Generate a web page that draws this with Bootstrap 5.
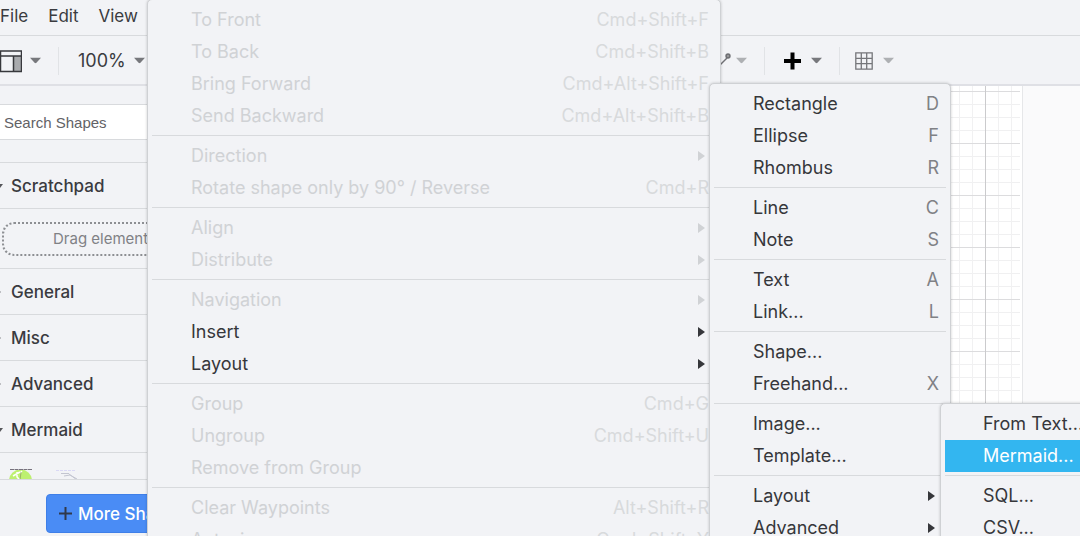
<!DOCTYPE html>
<html lang="en">
<head>
<meta charset="utf-8">
<meta name="viewport" content="width=device-width, initial-scale=1">
<title>Diagram editor</title>
<link href="https://cdn.jsdelivr.net/npm/bootstrap@5.3.0/dist/css/bootstrap.min.css" rel="stylesheet">
<style>
  :root { --chrome: #f2f3f6; --line: #d8dadd; --ink: #3a3b3f; --off: #d0d2d5; }
  body { font-family: Inter, "Liberation Sans", sans-serif; font-size: 17px; line-height: 24px; color: var(--ink); background: var(--chrome); }
  .menubar { height: 36px; gap: 20px; border-bottom: 1px solid var(--line); }
  .menubar a { color: var(--ink); }
  .toolbar { height: 50px; padding-top: 1px; border-bottom: 2px solid #dfe0e5; }
  .tools-right { margin-right: 186px; }
  .tool { border: 0; padding: 0; background: none; color: var(--ink); display: flex; align-items: center; gap: 8px; }
  .tool.wide { gap: 10px; }
  .zoom-level { font-size: 18px; }
  .rule { width: 1px; height: 28px; margin: 0 15px 0 17px; background: #e1e3e6; }
  .sidebar { width: 240px; background: var(--chrome); }
  .searchbox { height: 36px; padding: 0 4px; border: 1px solid var(--line); border-left: 0; border-radius: 0; font: 15px "Liberation Sans", sans-serif; color: #555; background: #fff; }
  .searchbox::placeholder { color: #626266; opacity: 1; }
  .find { padding: 18px 0 22px; border-bottom: 1px solid var(--line); }
  .section { height: 46px; gap: 8px; padding: 0; border: 0; border-bottom: 1px solid var(--line); background: none; color: var(--ink); font-size: 17px; font-weight: 500; }
  .scratch { height: 60px; padding: 13px 2px; border-bottom: 1px solid var(--line); }
  .dropzone { border: 2px dotted #8d8f93; border-radius: 12px; height: 34px; padding-left: 49px; font-size: 15px; color: #808185; }
  .thumbs { padding: 15px 0 0 9px; gap: 23px; }
  .foot { height: 57px; padding: 14px 0 0 46px; border-top: 1px solid var(--line); background: var(--chrome); }
  .more { height: 39px; padding: 0 12px; gap: 6px; border: 1px solid #3f7fe8; border-radius: 4px; background: #4a8cf5; color: #fff; font-size: 17px; font-weight: 500; }
  .canvas { background: #fafafb; }
  .paper { margin-right: 57px; border-right: 1px solid #e6e7e9; padding-right: 2px; background: #fff; }
  .grid {
    background-image:
      linear-gradient(to left, #cbcbcd 1px, transparent 1px),
      linear-gradient(#dcdcde 1px, transparent 1px),
      linear-gradient(to left, #f1f1f2 1px, transparent 1px),
      linear-gradient(#f0f0f1 1px, transparent 1px);
    background-size: 52px 52px, 52px 52px, 13px 13px, 13px 13px;
    background-position: right 34px top 5px, right 34px top 5px, right 8px top 5px, right 8px top 5px;
  }
  .popup { position: absolute; display: block; margin: 0; padding: 4px; border: 1px solid #cfd1d4; border-radius: 5px; background: var(--chrome); box-shadow: 0 0 3px rgba(0, 0, 0, .2); font-size: 18px; color: var(--ink); }
  .popup .dropdown-item { height: 32px; padding: 0 7px 0 39px; display: flex; align-items: center; justify-content: space-between; color: #36373b; }
  .popup .dropdown-item:disabled { color: var(--off); }
  .popup .dropdown-item.picked { background: #33b6f0; color: #fff; }
  .popup kbd { padding: 0; background: none; color: #808185; font: inherit; }
  .popup :disabled kbd { color: #d8dadc; }
  .popup .dropdown-divider { margin: 3px 0 4px; border-top: 1px solid var(--line); opacity: 1; }
  .menu-arrange { left: 147px; top: -1px; width: 574px; z-index: 10; }
  .menu-insert { left: 709px; top: 83px; width: 242px; z-index: 20; }
  .menu-advanced { left: 940px; top: 403px; width: 180px; z-index: 30; }
  .menu-advanced .dropdown-item { padding-left: 38px; }
</style>
<script src="https://cdn.jsdelivr.net/npm/bootstrap@5.3.0/dist/js/bootstrap.bundle.min.js"></script>
</head>
<body class="vh-100 overflow-hidden position-relative d-flex flex-column">
<svg class="d-none">
  <symbol id="down" viewBox="0 0 12 7"><path d="M0 0.5h12L7 6q-1 .8-2 0z" fill="currentColor"/></symbol>
  <symbol id="right" viewBox="0 0 7 10"><path d="M0 0l7 5-7 5z" fill="currentColor"/></symbol>
  <symbol id="open" viewBox="0 0 3 6"><path d="M0 1h3L0 5z" fill="#55565a"/></symbol>
  <symbol id="shut" viewBox="0 0 3 6"><path d="M0 2l1 1-1 1z" fill="#8a8b8f"/></symbol>
</svg>

<nav class="menubar d-flex align-items-center flex-shrink-0 pb-1">
  <a class="text-decoration-none" href="#">File</a>
  <a class="text-decoration-none" href="#">Edit</a>
  <a class="text-decoration-none" href="#">View</a>
</nav>

<div class="toolbar d-flex align-items-center flex-shrink-0 justify-content-between">
  <div class="d-flex align-items-center">
    <button class="tool" aria-label="View panels">
      <svg width="22" height="24" viewBox="0 0 22 24" fill="none"><path d="M13.500 7h7.500v15h-7.500z" fill="#a9abae"/><path d="M-1 2h22.500v20.500H-1M0 7h21M13.500 7v15M.5 2v20" stroke="#37383c" stroke-width="1.500"/></svg>
      <svg width="11" height="7" color="#77787c"><use href="#down"/></svg>
    </button>
    <span class="rule"></span>
    <button class="tool zoom-level ms-1">100%<svg width="11" height="7" color="#77787c"><use href="#down"/></svg></button>
  </div>
  <div class="tools-right d-flex align-items-center">
    <button class="tool gap-1" aria-label="Waypoints">
      <svg width="24" height="24" viewBox="0 0 24 24" fill="none" stroke="#707175"><path d="M8 20L19 9" stroke-width="1.500"/><circle cx="20" cy="7" r="1.800" fill="#aaa" stroke-width="1.800"/></svg>
      <svg width="11" height="7" color="#aeb0b3"><use href="#down"/></svg>
    </button>
    <span class="rule"></span>
    <button class="tool wide ms-1" aria-label="Insert">
      <svg width="17" height="18" viewBox="0 0 17 18"><path d="M8.500 .5v17M0 9h17" stroke="#000" stroke-width="4"/></svg>
      <svg width="11" height="7" color="#77787c"><use href="#down"/></svg>
    </button>
    <span class="rule"></span>
    <button class="tool wide" aria-label="Table">
      <svg width="18" height="18" viewBox="0 0 18 18" fill="none" stroke="#75767a" stroke-width="1.300"><path d="M.8.8h16.400v16.400H.8zM6.300 1v16M11.700 1v16M1 6.300h16M1 11.700h16"/></svg>
      <svg width="11" height="7" color="#aeb0b3"><use href="#down"/></svg>
    </button>
  </div>
</div>

<main class="d-flex flex-grow-1 overflow-hidden">
  <aside class="sidebar d-flex flex-column flex-shrink-0">
    <div class="flex-grow-1 overflow-hidden">
      <div class="find"><input class="searchbox w-100 d-block" type="text" placeholder="Search Shapes" aria-label="Search Shapes"></div>
      <button class="section w-100 d-flex align-items-center"><svg width="3" height="6"><use href="#open"/></svg>Scratchpad</button>
      <div class="scratch"><div class="dropzone d-flex align-items-center">Drag elements here</div></div>
      <button class="section w-100 d-flex align-items-center"><svg width="3" height="6"><use href="#shut"/></svg>General</button>
      <button class="section w-100 d-flex align-items-center"><svg width="3" height="6"><use href="#shut"/></svg>Misc</button>
      <button class="section w-100 d-flex align-items-center"><svg width="3" height="6"><use href="#shut"/></svg>Advanced</button>
      <button class="section w-100 d-flex align-items-center"><svg width="3" height="6"><use href="#open"/></svg>Mermaid</button>
      <div class="thumbs d-flex">
        <svg width="23" height="22" viewBox="0 0 23 22" fill="none"><circle cx="11.500" cy="13" r="11.500" fill="#bdf070"/><path d="M0 2h23V0H0z" fill="#f2f3f6"/><path d="M1 1.500h22" stroke="#77727d" stroke-dasharray="4 .5"/><path d="M4 8l7-4M8 4v5l3 3M11 5l2-2" stroke="#fff" stroke-width="1.500"/><path d="M12 4l-1 8" stroke="#8a9a60" stroke-width=".7"/></svg>
        <svg width="24" height="22" viewBox="0 0 24 22" fill="none"><path d="M1 2.500h20" stroke="#d9d8f5" stroke-dasharray="3 1"/><path d="M6 5.500h8M9 8l6-1 7 4M14 6l8 6" stroke="#c3c5d0"/></svg>
      </div>
    </div>
    <div class="foot flex-shrink-0"><button class="more d-flex align-items-center"><svg width="13" height="13" viewBox="0 0 13 13"><path d="M6.500 0v13M0 6.500h13" stroke="#30394a" stroke-width="2"/></svg>More Shapes</button></div>
  </aside>
  <section class="canvas flex-grow-1 d-flex"><div class="paper flex-grow-1 d-flex"><div class="grid flex-grow-1"></div></div></section>
</main>

<div class="popup dropdown-menu menu-arrange">
  <button class="dropdown-item" disabled>To Front<kbd>Cmd+Shift+F</kbd></button>
  <button class="dropdown-item" disabled>To Back<kbd>Cmd+Shift+B</kbd></button>
  <button class="dropdown-item" disabled>Bring Forward<kbd>Cmd+Alt+Shift+F</kbd></button>
  <button class="dropdown-item" disabled>Send Backward<kbd>Cmd+Alt+Shift+B</kbd></button>
  <hr class="dropdown-divider">
  <button class="dropdown-item" disabled>Direction<svg class="me-1" width="7" height="10"><use href="#right"/></svg></button>
  <button class="dropdown-item" disabled>Rotate shape only by 90° / Reverse<kbd>Cmd+R</kbd></button>
  <hr class="dropdown-divider">
  <button class="dropdown-item" disabled>Align<svg class="me-1" width="7" height="10"><use href="#right"/></svg></button>
  <button class="dropdown-item" disabled>Distribute<svg class="me-1" width="7" height="10"><use href="#right"/></svg></button>
  <hr class="dropdown-divider">
  <button class="dropdown-item" disabled>Navigation<svg class="me-1" width="7" height="10"><use href="#right"/></svg></button>
  <button class="dropdown-item">Insert<svg class="me-1" width="7" height="10"><use href="#right"/></svg></button>
  <button class="dropdown-item">Layout<svg class="me-1" width="7" height="10"><use href="#right"/></svg></button>
  <hr class="dropdown-divider">
  <button class="dropdown-item" disabled>Group<kbd>Cmd+G</kbd></button>
  <button class="dropdown-item" disabled>Ungroup<kbd>Cmd+Shift+U</kbd></button>
  <button class="dropdown-item" disabled>Remove from Group</button>
  <hr class="dropdown-divider">
  <button class="dropdown-item" disabled>Clear Waypoints<kbd>Alt+Shift+R</kbd></button>
  <button class="dropdown-item" disabled>Autosize<kbd>Cmd+Shift+Y</kbd></button>
</div>

<div class="popup dropdown-menu menu-insert">
  <button class="dropdown-item">Rectangle<kbd>D</kbd></button>
  <button class="dropdown-item">Ellipse<kbd>F</kbd></button>
  <button class="dropdown-item">Rhombus<kbd>R</kbd></button>
  <hr class="dropdown-divider">
  <button class="dropdown-item">Line<kbd>C</kbd></button>
  <button class="dropdown-item">Note<kbd>S</kbd></button>
  <hr class="dropdown-divider">
  <button class="dropdown-item">Text<kbd>A</kbd></button>
  <button class="dropdown-item">Link...<kbd>L</kbd></button>
  <hr class="dropdown-divider">
  <button class="dropdown-item">Shape...</button>
  <button class="dropdown-item">Freehand...<kbd>X</kbd></button>
  <hr class="dropdown-divider">
  <button class="dropdown-item">Image...</button>
  <button class="dropdown-item">Template...</button>
  <hr class="dropdown-divider">
  <button class="dropdown-item">Layout<svg class="me-1" width="7" height="10"><use href="#right"/></svg></button>
  <button class="dropdown-item">Advanced<svg class="me-1" width="7" height="10"><use href="#right"/></svg></button>
</div>

<div class="popup dropdown-menu menu-advanced">
  <button class="dropdown-item">From Text...</button>
  <button class="dropdown-item picked">Mermaid...</button>
  <hr class="dropdown-divider">
  <button class="dropdown-item">SQL...</button>
  <button class="dropdown-item">CSV...</button>
</div>
</body>
</html>
